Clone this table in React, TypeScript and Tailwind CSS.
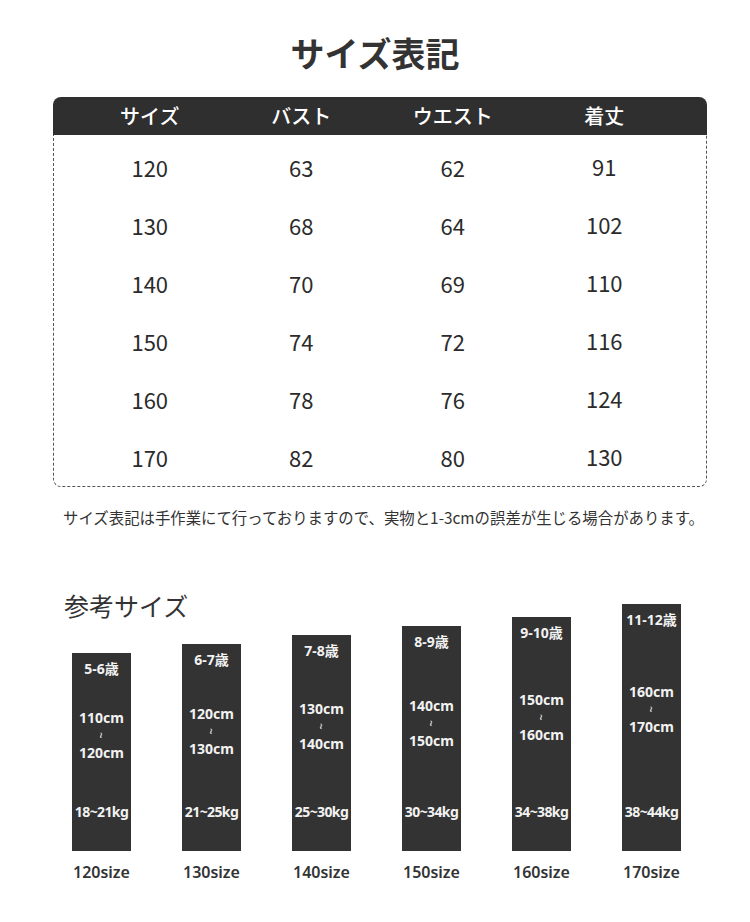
import React from "react";

const rows = [
  ["120", "63", "62", "91"],
  ["130", "68", "64", "102"],
  ["140", "70", "69", "110"],
  ["150", "74", "72", "116"],
  ["160", "78", "76", "124"],
  ["170", "82", "80", "130"],
];

const bars = [
  { age: "5-6歳", from: "110cm", to: "120cm", kg: "18~21kg", size: "120size", h: "h-[198px]", mt: "mt-[30px]" },
  { age: "6-7歳", from: "120cm", to: "130cm", kg: "21~25kg", size: "130size", h: "h-[207px]", mt: "mt-[35px]" },
  { age: "7-8歳", from: "130cm", to: "140cm", kg: "25~30kg", size: "140size", h: "h-[216px]", mt: "mt-[39px]" },
  { age: "8-9歳", from: "140cm", to: "150cm", kg: "30~34kg", size: "150size", h: "h-[225px]", mt: "mt-[45px]" },
  { age: "9-10歳", from: "150cm", to: "160cm", kg: "34~38kg", size: "160size", h: "h-[234px]", mt: "mt-[48px]" },
  { age: "11-12歳", from: "160cm", to: "170cm", kg: "38~44kg", size: "170size", h: "h-[247px]", mt: "mt-[53px]" },
];

export default function App() {
  return (
    <div className="w-[750px] min-h-[922px] bg-white text-[#333] font-['Noto_Sans_CJK_JP','Noto_Sans',sans-serif]">
      {/* Title */}
      <h1 className="pt-[33px] text-center text-[34px] leading-[40px] font-bold text-[#333]">サイズ表記</h1>

      {/* Size table */}
      <div className="mx-[53px] mt-[24px] w-[654px]">
        <div className="grid grid-cols-4 h-[38px] items-center rounded-t-[8px] bg-[#2f2f2f] pl-[21px] pr-[27px] text-white text-[20px] font-medium leading-none">
          <div className="text-center">サイズ</div>
          <div className="text-center">バスト</div>
          <div className="text-center">ウエスト</div>
          <div className="text-center">着丈</div>
        </div>
        <div className="border-x border-b border-dashed border-[#555] rounded-b-[8px] pt-[3px] pl-[20px] pr-[26px]">
          {rows.map((row, i) => (
            <div key={i} className="grid grid-cols-4 h-[58px] items-center text-[22px] leading-none text-[#2b2b2b]">
              {row.map((v, j) => (
                <div key={j} className={j === 3 ? "text-center -mt-[3px]" : "text-center"}>
                  {v}
                </div>
              ))}
            </div>
          ))}
        </div>
      </div>

      {/* Note */}
      <p className="mt-[20px] pl-[17px] text-center text-[15.4px] leading-[20px] text-[#333]">
        サイズ表記は手作業にて行っておりますので、実物と1-3cmの誤差が生じる場合があります。
      </p>

      {/* Reference sizes */}
      <h2 className="mt-[62px] pl-[64px] text-[25px] leading-[32px] text-[#333]">参考サイズ</h2>
      <div className="-mt-[17px] flex items-end gap-[51px] pl-[72px] font-['Noto_Sans','Noto_Sans_CJK_JP',sans-serif]">
        {bars.map((b) => (
          <div key={b.size} className="flex w-[59px] flex-col items-center">
            <div className={`flex w-[59px] flex-col items-center bg-[#333] text-[#f2f2f2] text-[14px] font-bold ${b.h}`}>
              <div className="pt-[6px] leading-[20px]">{b.age}</div>
              <div className={`flex flex-col items-center ${b.mt}`}>
                <div className="leading-[17px]">{b.from}</div>
                <div className="flex h-[18px] items-center">
                  <span className="inline-block rotate-90 text-[11px] font-normal leading-none">~</span>
                </div>
                <div className="leading-[17px]">{b.to}</div>
              </div>
              <div className="mt-auto mb-[29px] whitespace-nowrap leading-[20px] tracking-[-0.6px]">{b.kg}</div>
            </div>
            <div className="mt-[11px] whitespace-nowrap text-[16px] font-semibold leading-[20px] text-[#333]">{b.size}</div>
          </div>
        ))}
      </div>
    </div>
  );
}
